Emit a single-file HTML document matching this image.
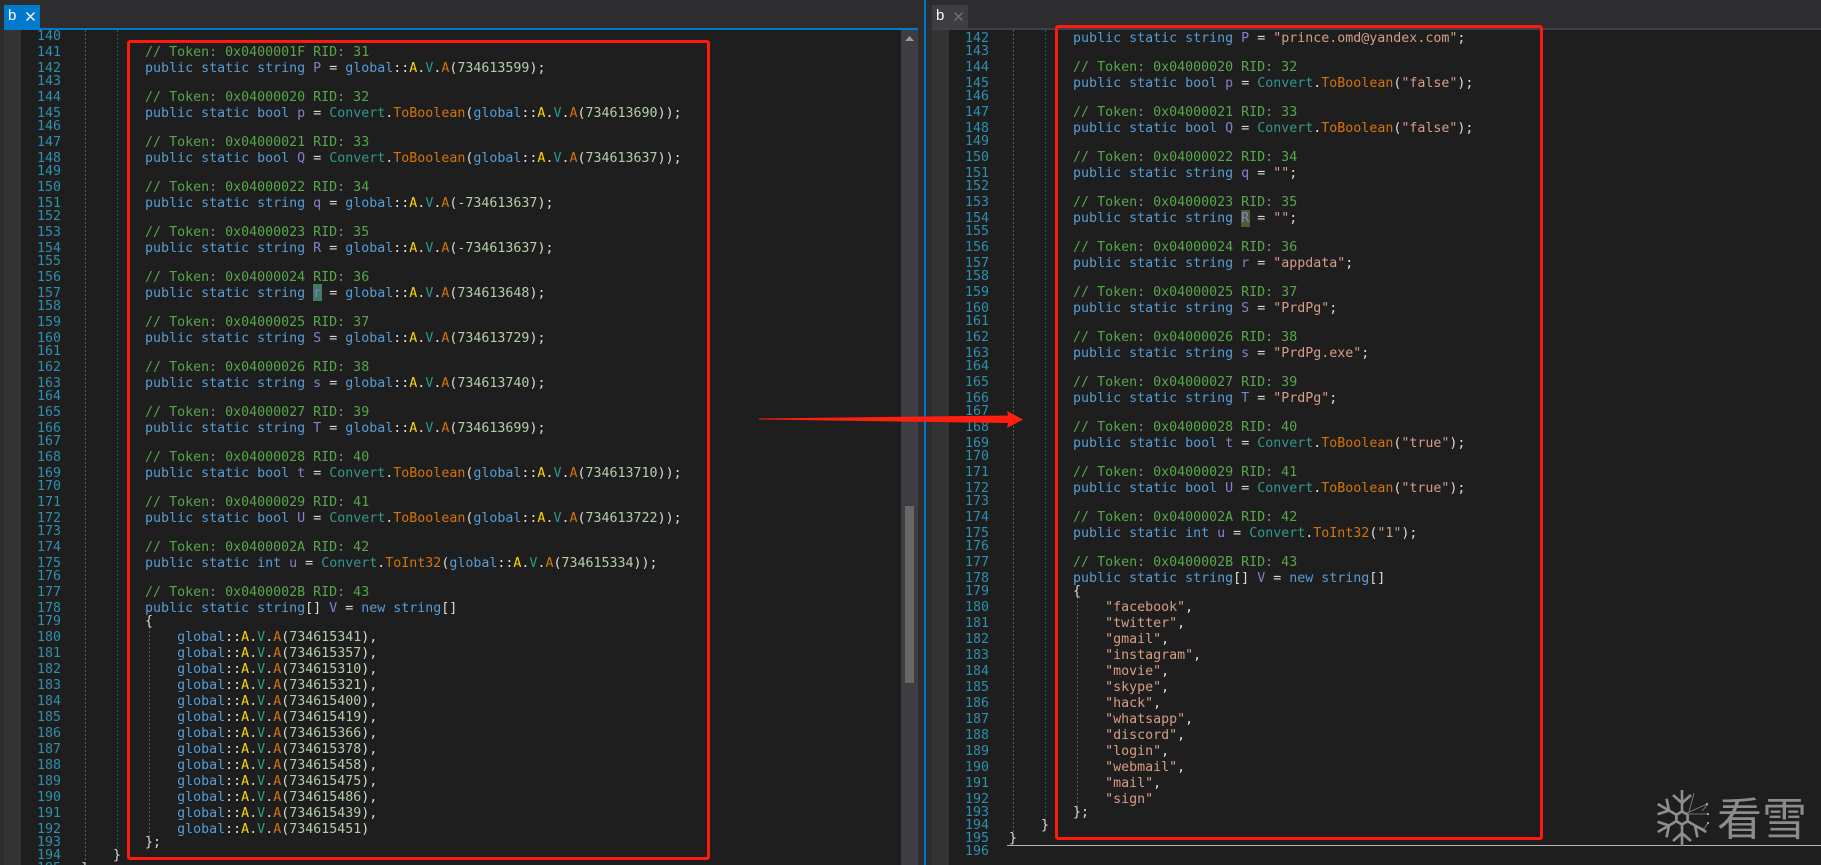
<!DOCTYPE html>
<html lang="en"><head><meta charset="utf-8"><title>b</title>
<style>
*{margin:0;padding:0;box-sizing:border-box;font:inherit}
html,body{width:1821px;height:865px;overflow:hidden;background:#2d2d30}
body{position:relative;font:13.3px/13px "DejaVu Sans Mono","Liberation Mono",monospace;color:#dcdcdc}
.abs{position:absolute}
.pane{position:absolute;top:30px;height:835px;overflow:hidden;background:linear-gradient(90deg,#2d2d30 0,#2d2d30 4px,#333 4px,#333 21px,#1e1e1e 21px)}
.lines{position:absolute;left:0;right:0}
.lines div{white-space:pre;padding-left:81px;position:relative;height:13px;line-height:13px}
.lines div.T{height:16px;padding-top:3px}
.lines i{position:absolute;left:37px;color:#2b91af;font-style:normal}
.g{position:absolute;width:1px;background:repeating-linear-gradient(180deg,#5c5c5c 0,#5c5c5c 2px,transparent 2px,transparent 4px)}
.g.t{background:repeating-linear-gradient(180deg,#2f5a50 0,#2f5a50 2px,transparent 2px,transparent 4px)}
b{color:#569cd6;font-weight:normal}
em{color:#57a64a;font-style:normal}
u{color:#7f83cc;text-decoration:none}
s{color:#d69d85;text-decoration:none}
code{color:#2f9a8a}
kbd{color:#d5730a}
samp{color:#b5cea8}
mark{color:#ffd700;background:none}
cite{color:#2f9a8a;font-style:normal}
dfn{color:#d5730a;font-style:normal}
.tab{position:absolute;top:5px;width:36px;height:23px;font:15px/22px "Liberation Sans",sans-serif;padding-left:4px;color:#fff}
.red{position:absolute;border:3px solid #ff1a0d;border-radius:3px}
</style></head><body>

<div class="pane" style="left:0;width:901px">
<div class="abs" style="left:313px;top:254px;width:9px;height:17px;background:#3f7a6a"></div>
<div class="g" style="left:85px;top:0;height:835px"></div>
<div class="g t" style="left:117px;top:0;height:820px"></div>
<div class="g" style="left:149px;top:597px;height:210px"></div>
<div class="lines" style="top:0">
<div><i>140</i></div>
<div class="T"><i>141</i>        <em>// Token: 0x0400001F RID: 31</em></div>
<div class="T"><i>142</i>        <b>public static string</b> <u>P</u> = <b>global</b>::<mark>A</mark>.<cite>V</cite>.<dfn>A</dfn>(<samp>734613599</samp>);</div>
<div><i>143</i></div>
<div class="T"><i>144</i>        <em>// Token: 0x04000020 RID: 32</em></div>
<div class="T"><i>145</i>        <b>public static bool</b> <u>p</u> = <code>Convert</code>.<kbd>ToBoolean</kbd>(<b>global</b>::<mark>A</mark>.<cite>V</cite>.<dfn>A</dfn>(<samp>734613690</samp>));</div>
<div><i>146</i></div>
<div class="T"><i>147</i>        <em>// Token: 0x04000021 RID: 33</em></div>
<div class="T"><i>148</i>        <b>public static bool</b> <u>Q</u> = <code>Convert</code>.<kbd>ToBoolean</kbd>(<b>global</b>::<mark>A</mark>.<cite>V</cite>.<dfn>A</dfn>(<samp>734613637</samp>));</div>
<div><i>149</i></div>
<div class="T"><i>150</i>        <em>// Token: 0x04000022 RID: 34</em></div>
<div class="T"><i>151</i>        <b>public static string</b> <u>q</u> = <b>global</b>::<mark>A</mark>.<cite>V</cite>.<dfn>A</dfn>(<samp>-734613637</samp>);</div>
<div><i>152</i></div>
<div class="T"><i>153</i>        <em>// Token: 0x04000023 RID: 35</em></div>
<div class="T"><i>154</i>        <b>public static string</b> <u>R</u> = <b>global</b>::<mark>A</mark>.<cite>V</cite>.<dfn>A</dfn>(<samp>-734613637</samp>);</div>
<div><i>155</i></div>
<div class="T"><i>156</i>        <em>// Token: 0x04000024 RID: 36</em></div>
<div class="T"><i>157</i>        <b>public static string</b> <u>r</u> = <b>global</b>::<mark>A</mark>.<cite>V</cite>.<dfn>A</dfn>(<samp>734613648</samp>);</div>
<div><i>158</i></div>
<div class="T"><i>159</i>        <em>// Token: 0x04000025 RID: 37</em></div>
<div class="T"><i>160</i>        <b>public static string</b> <u>S</u> = <b>global</b>::<mark>A</mark>.<cite>V</cite>.<dfn>A</dfn>(<samp>734613729</samp>);</div>
<div><i>161</i></div>
<div class="T"><i>162</i>        <em>// Token: 0x04000026 RID: 38</em></div>
<div class="T"><i>163</i>        <b>public static string</b> <u>s</u> = <b>global</b>::<mark>A</mark>.<cite>V</cite>.<dfn>A</dfn>(<samp>734613740</samp>);</div>
<div><i>164</i></div>
<div class="T"><i>165</i>        <em>// Token: 0x04000027 RID: 39</em></div>
<div class="T"><i>166</i>        <b>public static string</b> <u>T</u> = <b>global</b>::<mark>A</mark>.<cite>V</cite>.<dfn>A</dfn>(<samp>734613699</samp>);</div>
<div><i>167</i></div>
<div class="T"><i>168</i>        <em>// Token: 0x04000028 RID: 40</em></div>
<div class="T"><i>169</i>        <b>public static bool</b> <u>t</u> = <code>Convert</code>.<kbd>ToBoolean</kbd>(<b>global</b>::<mark>A</mark>.<cite>V</cite>.<dfn>A</dfn>(<samp>734613710</samp>));</div>
<div><i>170</i></div>
<div class="T"><i>171</i>        <em>// Token: 0x04000029 RID: 41</em></div>
<div class="T"><i>172</i>        <b>public static bool</b> <u>U</u> = <code>Convert</code>.<kbd>ToBoolean</kbd>(<b>global</b>::<mark>A</mark>.<cite>V</cite>.<dfn>A</dfn>(<samp>734613722</samp>));</div>
<div><i>173</i></div>
<div class="T"><i>174</i>        <em>// Token: 0x0400002A RID: 42</em></div>
<div class="T"><i>175</i>        <b>public static int</b> <u>u</u> = <code>Convert</code>.<kbd>ToInt32</kbd>(<b>global</b>::<mark>A</mark>.<cite>V</cite>.<dfn>A</dfn>(<samp>734615334</samp>));</div>
<div><i>176</i></div>
<div class="T"><i>177</i>        <em>// Token: 0x0400002B RID: 43</em></div>
<div class="T"><i>178</i>        <b>public static string</b>[] <u>V</u> = <b>new string</b>[]</div>
<div><i>179</i>        {</div>
<div class="T"><i>180</i>            <b>global</b>::<mark>A</mark>.<cite>V</cite>.<dfn>A</dfn>(<samp>734615341</samp>),</div>
<div class="T"><i>181</i>            <b>global</b>::<mark>A</mark>.<cite>V</cite>.<dfn>A</dfn>(<samp>734615357</samp>),</div>
<div class="T"><i>182</i>            <b>global</b>::<mark>A</mark>.<cite>V</cite>.<dfn>A</dfn>(<samp>734615310</samp>),</div>
<div class="T"><i>183</i>            <b>global</b>::<mark>A</mark>.<cite>V</cite>.<dfn>A</dfn>(<samp>734615321</samp>),</div>
<div class="T"><i>184</i>            <b>global</b>::<mark>A</mark>.<cite>V</cite>.<dfn>A</dfn>(<samp>734615400</samp>),</div>
<div class="T"><i>185</i>            <b>global</b>::<mark>A</mark>.<cite>V</cite>.<dfn>A</dfn>(<samp>734615419</samp>),</div>
<div class="T"><i>186</i>            <b>global</b>::<mark>A</mark>.<cite>V</cite>.<dfn>A</dfn>(<samp>734615366</samp>),</div>
<div class="T"><i>187</i>            <b>global</b>::<mark>A</mark>.<cite>V</cite>.<dfn>A</dfn>(<samp>734615378</samp>),</div>
<div class="T"><i>188</i>            <b>global</b>::<mark>A</mark>.<cite>V</cite>.<dfn>A</dfn>(<samp>734615458</samp>),</div>
<div class="T"><i>189</i>            <b>global</b>::<mark>A</mark>.<cite>V</cite>.<dfn>A</dfn>(<samp>734615475</samp>),</div>
<div class="T"><i>190</i>            <b>global</b>::<mark>A</mark>.<cite>V</cite>.<dfn>A</dfn>(<samp>734615486</samp>),</div>
<div class="T"><i>191</i>            <b>global</b>::<mark>A</mark>.<cite>V</cite>.<dfn>A</dfn>(<samp>734615439</samp>),</div>
<div class="T"><i>192</i>            <b>global</b>::<mark>A</mark>.<cite>V</cite>.<dfn>A</dfn>(<samp>734615451</samp>)</div>
<div><i>193</i>        };</div>
<div><i>194</i>    }</div>
<div><i>195</i>}</div>
</div>
</div>

<div class="pane" style="left:928px;width:893px">
<div class="abs" style="left:313px;top:180px;width:9px;height:17px;background:#4a6032"></div>
<div class="g" style="left:85px;top:0;height:803px"></div>
<div class="g t" style="left:117px;top:0;height:792px"></div>
<div class="g" style="left:149px;top:567px;height:210px"></div>
<div class="lines" style="top:-1px">
<div class="T"><i>142</i>        <b>public static string</b> <u>P</u> = <s>"prince.omd@yandex.com"</s>;</div>
<div><i>143</i></div>
<div class="T"><i>144</i>        <em>// Token: 0x04000020 RID: 32</em></div>
<div class="T"><i>145</i>        <b>public static bool</b> <u>p</u> = <code>Convert</code>.<kbd>ToBoolean</kbd>(<s>"false"</s>);</div>
<div><i>146</i></div>
<div class="T"><i>147</i>        <em>// Token: 0x04000021 RID: 33</em></div>
<div class="T"><i>148</i>        <b>public static bool</b> <u>Q</u> = <code>Convert</code>.<kbd>ToBoolean</kbd>(<s>"false"</s>);</div>
<div><i>149</i></div>
<div class="T"><i>150</i>        <em>// Token: 0x04000022 RID: 34</em></div>
<div class="T"><i>151</i>        <b>public static string</b> <u>q</u> = <s>""</s>;</div>
<div><i>152</i></div>
<div class="T"><i>153</i>        <em>// Token: 0x04000023 RID: 35</em></div>
<div class="T"><i>154</i>        <b>public static string</b> <u>R</u> = <s>""</s>;</div>
<div><i>155</i></div>
<div class="T"><i>156</i>        <em>// Token: 0x04000024 RID: 36</em></div>
<div class="T"><i>157</i>        <b>public static string</b> <u>r</u> = <s>"appdata"</s>;</div>
<div><i>158</i></div>
<div class="T"><i>159</i>        <em>// Token: 0x04000025 RID: 37</em></div>
<div class="T"><i>160</i>        <b>public static string</b> <u>S</u> = <s>"PrdPg"</s>;</div>
<div><i>161</i></div>
<div class="T"><i>162</i>        <em>// Token: 0x04000026 RID: 38</em></div>
<div class="T"><i>163</i>        <b>public static string</b> <u>s</u> = <s>"PrdPg.exe"</s>;</div>
<div><i>164</i></div>
<div class="T"><i>165</i>        <em>// Token: 0x04000027 RID: 39</em></div>
<div class="T"><i>166</i>        <b>public static string</b> <u>T</u> = <s>"PrdPg"</s>;</div>
<div><i>167</i></div>
<div class="T"><i>168</i>        <em>// Token: 0x04000028 RID: 40</em></div>
<div class="T"><i>169</i>        <b>public static bool</b> <u>t</u> = <code>Convert</code>.<kbd>ToBoolean</kbd>(<s>"true"</s>);</div>
<div><i>170</i></div>
<div class="T"><i>171</i>        <em>// Token: 0x04000029 RID: 41</em></div>
<div class="T"><i>172</i>        <b>public static bool</b> <u>U</u> = <code>Convert</code>.<kbd>ToBoolean</kbd>(<s>"true"</s>);</div>
<div><i>173</i></div>
<div class="T"><i>174</i>        <em>// Token: 0x0400002A RID: 42</em></div>
<div class="T"><i>175</i>        <b>public static int</b> <u>u</u> = <code>Convert</code>.<kbd>ToInt32</kbd>(<s>"1"</s>);</div>
<div><i>176</i></div>
<div class="T"><i>177</i>        <em>// Token: 0x0400002B RID: 43</em></div>
<div class="T"><i>178</i>        <b>public static string</b>[] <u>V</u> = <b>new string</b>[]</div>
<div><i>179</i>        {</div>
<div class="T"><i>180</i>            <s>"facebook"</s>,</div>
<div class="T"><i>181</i>            <s>"twitter"</s>,</div>
<div class="T"><i>182</i>            <s>"gmail"</s>,</div>
<div class="T"><i>183</i>            <s>"instagram"</s>,</div>
<div class="T"><i>184</i>            <s>"movie"</s>,</div>
<div class="T"><i>185</i>            <s>"skype"</s>,</div>
<div class="T"><i>186</i>            <s>"hack"</s>,</div>
<div class="T"><i>187</i>            <s>"whatsapp"</s>,</div>
<div class="T"><i>188</i>            <s>"discord"</s>,</div>
<div class="T"><i>189</i>            <s>"login"</s>,</div>
<div class="T"><i>190</i>            <s>"webmail"</s>,</div>
<div class="T"><i>191</i>            <s>"mail"</s>,</div>
<div class="T"><i>192</i>            <s>"sign"</s></div>
<div><i>193</i>        };</div>
<div><i>194</i>    }</div>
<div><i>195</i>}</div>
<div><i>196</i></div>
</div>
</div>

<!-- top chrome -->
<div class="abs" style="left:4px;top:28px;width:914px;height:2px;background:#007acc"></div>
<div class="abs" style="left:932px;top:28px;width:889px;height:2px;background:#3f3f46"></div>
<div class="tab" style="left:4px;background:#007acc">b<svg class="abs" style="left:22px;top:7px" width="9" height="9" viewBox="0 0 9 9"><path d="M.5.5l8 8M8.500.5l-8 8" stroke="#fff" stroke-width="1.3" fill="none"/></svg></div>
<div class="tab" style="left:932px;background:#3e3e42">b<svg class="abs" style="left:22px;top:7px" width="9" height="9" viewBox="0 0 9 9"><path d="M.5.5l8 8M8.500.5l-8 8" stroke="#737376" stroke-width="1.3" fill="none"/></svg></div>

<!-- scrollbar -->
<div class="abs" style="left:901px;top:30px;width:17px;height:835px;background:#3e3e42"></div>
<svg class="abs" style="left:905px;top:36px" width="9" height="5"><path d="M4.500 0L9 5H0z" fill="#999"/></svg>
<div class="abs" style="left:905px;top:506px;width:9px;height:177px;background:#686868"></div>

<!-- splitter -->
<div class="abs" style="left:924px;top:0;width:2px;height:865px;background:#007acc"></div>

<!-- bottom rule on right pane -->
<div class="abs" style="left:1007px;top:845px;width:814px;height:1px;background:#b4b4b4"></div>

<!-- annotations -->
<div class="red" style="left:127px;top:40px;width:583px;height:820px"></div>
<div class="red" style="left:1055px;top:25px;width:488px;height:815px"></div>
<svg class="abs" style="left:750px;top:400px" width="290" height="40" viewBox="750 400 290 40"><path d="M759 418.500L1008 415.500L1007 411L1023 419.500L1007 428L1008 423L759 419.500Z" fill="#ff1f10"/></svg>

<!-- watermark -->
<svg class="abs" style="left:1650px;top:785px" width="65" height="66" viewBox="-32 -33 65 66">
<g stroke="#8f8f8f" stroke-width="2.600" fill="none">
<polygon points="0,-6.500 5.600,-3.200 5.600,3.200 0,6.500 -5.600,3.200 -5.600,-3.200"/>
<path d="M0-7V-28M0-15L-9-23M0-15L9-23"/>
<path transform="rotate(-60)" d="M0-7V-28M0-15L-9-23M0-15L9-23"/>
<path transform="rotate(-120)" d="M0-7V-28M0-15L-9-23M0-15L9-23"/>
<path transform="rotate(180)" d="M0-7V-28M0-15L-9-23M0-15L9-23"/>
<path transform="rotate(120)" d="M0-7V-28M0-15L9-23"/>
</g>
<g stroke="#8a8a8a" stroke-width=".8" fill="none">
<path d="M5-5L25-14M5-4L26-4M7-6L12-25M20-7L26-14"/>
<path d="M7 4L22 11L26 5"/>
</g>
<g fill="#aaa"><circle cx="25" cy="-14" r="1.100"/><circle cx="26" cy="-4" r="1.100"/><circle cx="26" cy="5" r="1.100"/></g>
</svg>
<div class="abs" style="left:1717px;top:793px;font:45px/46px 'Noto Sans CJK SC','WenQuanYi Zen Hei',sans-serif;color:#8c8c8c;white-space:nowrap">看雪</div>

</body></html>
